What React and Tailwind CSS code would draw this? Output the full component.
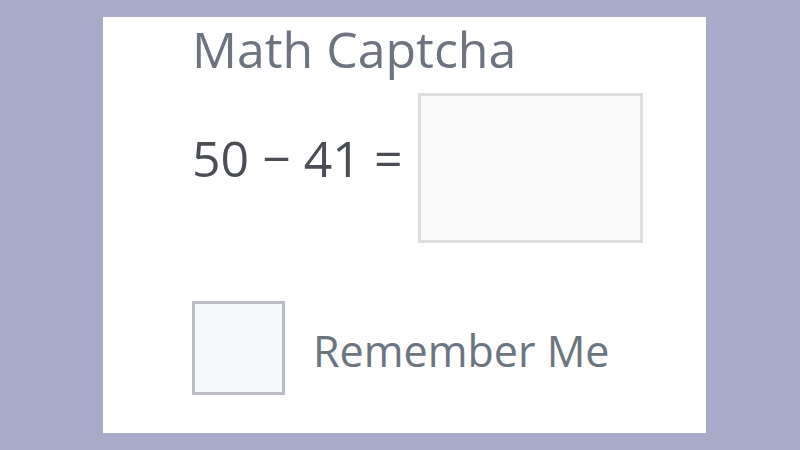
const App = () => {
  return (
    <div className="h-[450px] w-[800px] overflow-hidden bg-[#a9aac7] pt-[17px] pl-[103px]" style={{ fontFamily: '"Open Sans", "Noto Sans", sans-serif' }}>
      <div className="flex h-[416px] w-[603px] flex-col bg-white pl-[89px]">
        <h1 className="text-[50px] leading-[64px] text-[#6d7480]">Math Captcha</h1>
        <div className="mt-[12px] flex items-start">
          <span className="mt-[40px] text-[50px] leading-none text-[#4a4e54]">50 − 41 =</span>
          <input type="text" className="ml-[15px] h-[150px] w-[225px] border-[3px] border-[#dedede] bg-[#fafafa] outline-none" />
        </div>
        <label className="mt-[58px] flex items-center">
          <span className="h-[94px] w-[93px] border-[3px] border-[#b9bdc1] bg-[#f7f8fa]" />
          <span className="ml-[28px] mt-[6px] text-[43px] text-[#6b7580]">Remember Me</span>
        </label>
      </div>
    </div>
  );
};

export default App;
